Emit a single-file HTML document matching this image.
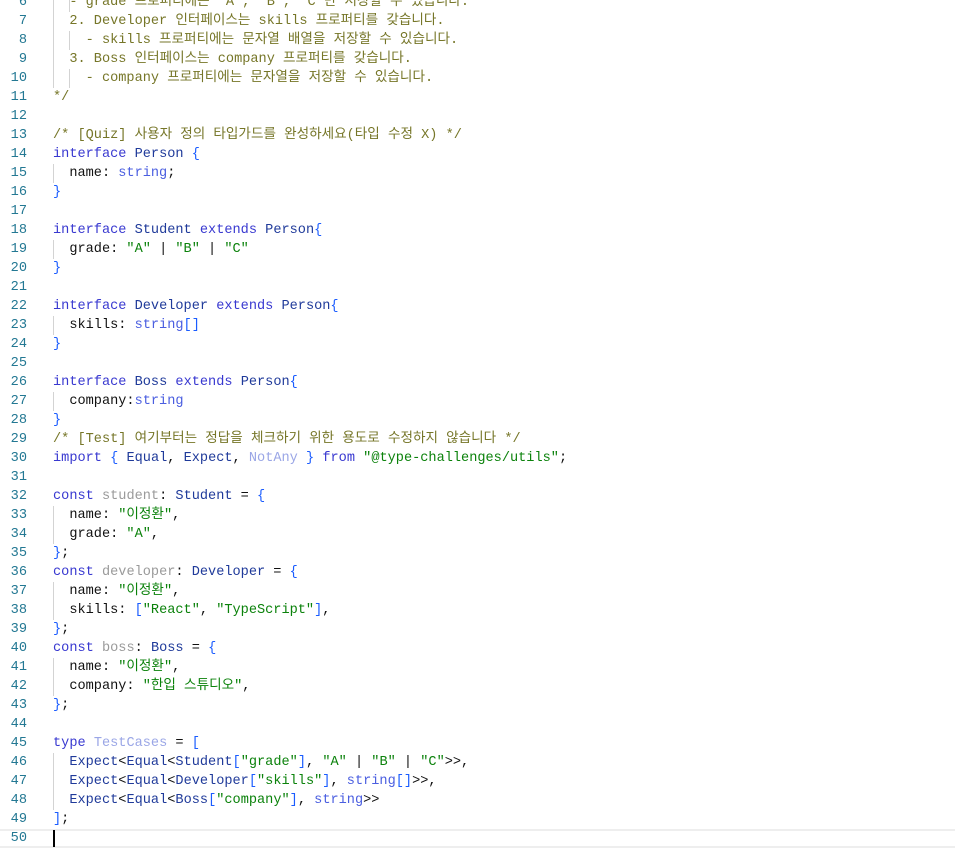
<!DOCTYPE html>
<html><head><meta charset="utf-8"><style>
body{margin:0;width:955px;height:848px;overflow:hidden;background:#fff;font-family:"Liberation Mono","Noto Sans CJK KR",monospace;font-size:13.6px;}
#c{position:absolute;top:-7px;left:0;width:955px}
.l{position:relative;height:19px;line-height:19px;white-space:pre;color:#111}
.n{position:absolute;left:0;width:27px;text-align:right;color:#237893}
.t{position:absolute;left:53px}
.g{position:absolute;top:0;width:1px;height:19px;background:#d3d3d3}
.cm{color:#767628}.k{color:#3838d0}.ty{color:#1f3a9a}.s{color:#0b820b}.b{color:#1a5cff}.v{color:#9a9a9a}.u{color:#9aa6e6}.p{color:#4a5ee0}
.cur{border-top:2px solid #eee;border-bottom:2px solid #eee;height:15px}
</style></head><body><div id="c">
<div class="l"><span class="n">6</span><span class="g" style="left:53px"></span><span class="g" style="left:69px"></span><span class="t cm">  - grade 프로퍼티에는 "A", "B", "C"만 저장할 수 있습니다.</span></div>
<div class="l"><span class="n">7</span><span class="g" style="left:53px"></span><span class="t cm">  2. Developer 인터페이스는 skills 프로퍼티를 갖습니다.</span></div>
<div class="l"><span class="n">8</span><span class="g" style="left:53px"></span><span class="g" style="left:69px"></span><span class="t cm">    - skills 프로퍼티에는 문자열 배열을 저장할 수 있습니다.</span></div>
<div class="l"><span class="n">9</span><span class="g" style="left:53px"></span><span class="t cm">  3. Boss 인터페이스는 company 프로퍼티를 갖습니다.</span></div>
<div class="l"><span class="n">10</span><span class="g" style="left:53px"></span><span class="g" style="left:69px"></span><span class="t cm">    - company 프로퍼티에는 문자열을 저장할 수 있습니다.</span></div>
<div class="l"><span class="n">11</span><span class="t cm">*/</span></div>
<div class="l"><span class="n">12</span></div>
<div class="l"><span class="n">13</span><span class="t cm">/* [Quiz] 사용자 정의 타입가드를 완성하세요(타입 수정 X) */</span></div>
<div class="l"><span class="n">14</span><span class="t"><span class="k">interface</span> <span class="ty">Person</span> <span class="b">{</span></span></div>
<div class="l"><span class="n">15</span><span class="g" style="left:53px"></span><span class="t">  name: <span class="p">string</span>;</span></div>
<div class="l"><span class="n">16</span><span class="t b">}</span></div>
<div class="l"><span class="n">17</span></div>
<div class="l"><span class="n">18</span><span class="t"><span class="k">interface</span> <span class="ty">Student</span> <span class="k">extends</span> <span class="ty">Person</span><span class="b">{</span></span></div>
<div class="l"><span class="n">19</span><span class="g" style="left:53px"></span><span class="t">  grade: <span class="s">"A"</span> | <span class="s">"B"</span> | <span class="s">"C"</span></span></div>
<div class="l"><span class="n">20</span><span class="t b">}</span></div>
<div class="l"><span class="n">21</span></div>
<div class="l"><span class="n">22</span><span class="t"><span class="k">interface</span> <span class="ty">Developer</span> <span class="k">extends</span> <span class="ty">Person</span><span class="b">{</span></span></div>
<div class="l"><span class="n">23</span><span class="g" style="left:53px"></span><span class="t">  skills: <span class="p">string</span><span class="b">[]</span></span></div>
<div class="l"><span class="n">24</span><span class="t b">}</span></div>
<div class="l"><span class="n">25</span></div>
<div class="l"><span class="n">26</span><span class="t"><span class="k">interface</span> <span class="ty">Boss</span> <span class="k">extends</span> <span class="ty">Person</span><span class="b">{</span></span></div>
<div class="l"><span class="n">27</span><span class="g" style="left:53px"></span><span class="t">  company:<span class="p">string</span></span></div>
<div class="l"><span class="n">28</span><span class="t b">}</span></div>
<div class="l"><span class="n">29</span><span class="t cm">/* [Test] 여기부터는 정답을 체크하기 위한 용도로 수정하지 않습니다 */</span></div>
<div class="l"><span class="n">30</span><span class="t"><span class="k">import</span> <span class="b">{</span> <span class="ty">Equal</span>, <span class="ty">Expect</span>, <span class="u">NotAny</span> <span class="b">}</span> <span class="k">from</span> <span class="s">"@type-challenges/utils"</span>;</span></div>
<div class="l"><span class="n">31</span></div>
<div class="l"><span class="n">32</span><span class="t"><span class="k">const</span> <span class="v">student</span>: <span class="ty">Student</span> = <span class="b">{</span></span></div>
<div class="l"><span class="n">33</span><span class="g" style="left:53px"></span><span class="t">  name: <span class="s">"이정환"</span>,</span></div>
<div class="l"><span class="n">34</span><span class="g" style="left:53px"></span><span class="t">  grade: <span class="s">"A"</span>,</span></div>
<div class="l"><span class="n">35</span><span class="t"><span class="b">}</span>;</span></div>
<div class="l"><span class="n">36</span><span class="t"><span class="k">const</span> <span class="v">developer</span>: <span class="ty">Developer</span> = <span class="b">{</span></span></div>
<div class="l"><span class="n">37</span><span class="g" style="left:53px"></span><span class="t">  name: <span class="s">"이정환"</span>,</span></div>
<div class="l"><span class="n">38</span><span class="g" style="left:53px"></span><span class="t">  skills: <span class="b">[</span><span class="s">"React"</span>, <span class="s">"TypeScript"</span><span class="b">]</span>,</span></div>
<div class="l"><span class="n">39</span><span class="t"><span class="b">}</span>;</span></div>
<div class="l"><span class="n">40</span><span class="t"><span class="k">const</span> <span class="v">boss</span>: <span class="ty">Boss</span> = <span class="b">{</span></span></div>
<div class="l"><span class="n">41</span><span class="g" style="left:53px"></span><span class="t">  name: <span class="s">"이정환"</span>,</span></div>
<div class="l"><span class="n">42</span><span class="g" style="left:53px"></span><span class="t">  company: <span class="s">"한입 스튜디오"</span>,</span></div>
<div class="l"><span class="n">43</span><span class="t"><span class="b">}</span>;</span></div>
<div class="l"><span class="n">44</span></div>
<div class="l"><span class="n">45</span><span class="t"><span class="k">type</span> <span class="u">TestCases</span> = <span class="b">[</span></span></div>
<div class="l"><span class="n">46</span><span class="g" style="left:53px"></span><span class="t">  <span class="ty">Expect</span>&lt;<span class="ty">Equal</span>&lt;<span class="ty">Student</span><span class="b">[</span><span class="s">"grade"</span><span class="b">]</span>, <span class="s">"A"</span> | <span class="s">"B"</span> | <span class="s">"C"</span>&gt;&gt;,</span></div>
<div class="l"><span class="n">47</span><span class="g" style="left:53px"></span><span class="t">  <span class="ty">Expect</span>&lt;<span class="ty">Equal</span>&lt;<span class="ty">Developer</span><span class="b">[</span><span class="s">"skills"</span><span class="b">]</span>, <span class="p">string</span><span class="b">[]</span>&gt;&gt;,</span></div>
<div class="l"><span class="n">48</span><span class="g" style="left:53px"></span><span class="t">  <span class="ty">Expect</span>&lt;<span class="ty">Equal</span>&lt;<span class="ty">Boss</span><span class="b">[</span><span class="s">"company"</span><span class="b">]</span>, <span class="p">string</span>&gt;&gt;</span></div>
<div class="l"><span class="n">49</span><span class="t"><span class="b">]</span>;</span></div>
<div class="l cur"><span class="n" style="line-height:15px">50</span><span style="position:absolute;left:53px;top:-1px;width:2px;height:17px;background:#000"></span></div>
</div></body></html>
